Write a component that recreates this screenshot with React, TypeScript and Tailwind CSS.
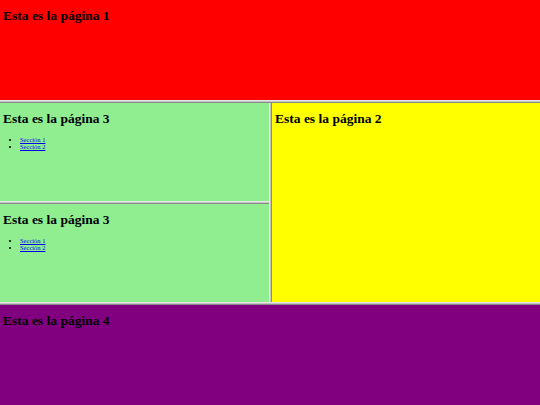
const serif = "font-['Liberation_Serif','Times_New_Roman',serif]";

function Title({ n }: { n: number }) {
  return (
    <h1 className="pl-[3px] pt-[9px] text-[13.5px] font-bold leading-none text-black">
      Esta es la página {n}
    </h1>
  );
}

function HBorder() {
  return <div className="h-[3px] shrink-0 border-t border-b border-t-[#e6e6e6] border-b-[#8a8a8a] bg-[#c4c4c4]" />;
}

function VBorder() {
  return <div className="w-[3px] shrink-0 border-l border-r border-l-[#e6e6e6] border-r-[#8a8a8a] bg-[#c4c4c4]" />;
}

function Page3() {
  return (
    <div className="flex-1 bg-[#90ee90]">
      <Title n={3} />
      <ul className="mt-[10px] list-disc pl-[20px] text-[6.5px] leading-[7px]">
        <li>
          <a href="#s1" className="text-[#0000ee] underline">
            Sección 1
          </a>
        </li>
        <li>
          <a href="#s2" className="text-[#0000ee] underline">
            Sección 2
          </a>
        </li>
      </ul>
    </div>
  );
}

export default function App() {
  return (
    <div className={`flex h-[405px] w-[540px] flex-col overflow-hidden ${serif}`}>
      <div className="h-[100px] shrink-0 bg-[#ff0000]">
        <Title n={1} />
      </div>
      <HBorder />
      <div className="flex h-[199px] shrink-0">
        <div className="flex w-[269px] shrink-0 flex-col">
          <Page3 />
          <HBorder />
          <Page3 />
        </div>
        <VBorder />
        <div className="flex-1 bg-[#ffff00]">
          <Title n={2} />
        </div>
      </div>
      <HBorder />
      <div className="flex-1 bg-[#800080]">
        <Title n={4} />
      </div>
    </div>
  );
}
